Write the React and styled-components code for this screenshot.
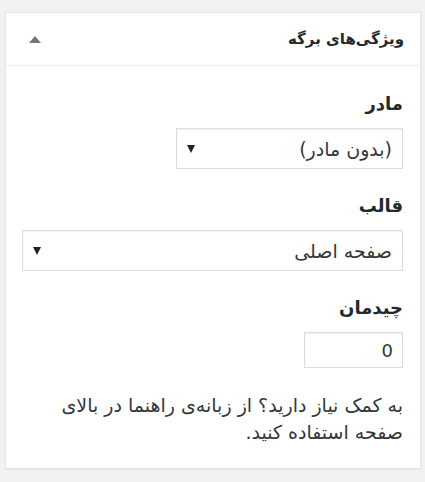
import React from 'react';
import styled, { createGlobalStyle } from 'styled-components';

const GlobalStyle = createGlobalStyle`
    html, body {
        margin: 0;
        padding: 0;
        background: #f1f1f1;
    }
    body {
        font-family: "DejaVu Sans", "Noto Sans", sans-serif;
        color: #32373c;
    }
`;

const Page = styled.div`
    padding: 12px 4px 14px 5px;
`;

const Box = styled.div`
    direction: rtl;
    background: #fff;
    border: 1px solid #e5e5e5;
    box-shadow: 0 1px 1px rgba(0, 0, 0, 0.04);
`;

const Header = styled.div`
    display: flex;
    align-items: center;
    justify-content: space-between;
    height: 52px;
    padding: 0 16px 0 23px;
    border-bottom: 1px solid #eee;
`;

const Title = styled.h2`
    margin: 0;
    font-size: 15px;
    font-weight: bold;
    color: #23282d;
`;

const Toggle = styled.span`
    width: 0;
    height: 0;
    border-left: 6px solid transparent;
    border-right: 6px solid transparent;
    border-bottom: 7px solid #72777c;
`;

const Content = styled.div`
    padding: 25px 17px 22px 16px;
`;

const Label = styled.p`
    margin: ${p => (p.first ? '0' : '24px')} 0 11px;
    font-size: 18px;
    line-height: 26px;
    font-weight: bold;
    color: #23282d;
`;

const Select = styled.div`
    display: flex;
    align-items: center;
    justify-content: space-between;
    box-sizing: border-box;
    width: ${p => p.width || '100%'};
    height: 41px;
    padding: 0 10px 0 10px;
    border: 1px solid #ddd;
    box-shadow: inset 0 1px 2px rgba(0, 0, 0, 0.07);
    font-size: 19px;
    color: #32373c;
`;

const Arrow = styled.span`
    width: 0;
    height: 0;
    border-left: 4px solid transparent;
    border-right: 4px solid transparent;
    border-top: 8px solid #222;
`;

const NumberInput = styled.div`
    box-sizing: border-box;
    width: 99px;
    height: 36px;
    padding: 0 9px;
    border: 1px solid #ddd;
    box-shadow: inset 0 1px 2px rgba(0, 0, 0, 0.07);
    display: flex;
    align-items: center;
    justify-content: flex-end;
    direction: ltr;
    font-size: 18px;
    color: #32373c;
`;

const Help = styled.p`
    max-width: 350px;
    margin: 24px 0 0;
    font-size: 19px;
    line-height: 27px;
    color: #32373c;
`;

export default function App() {
    return (
        <Page>
            <GlobalStyle />
            <Box>
                <Header>
                    <Title>ویژگی‌های برگه</Title>
                    <Toggle />
                </Header>
                <Content>
                    <Label first>مادر</Label>
                    <Select width="227px">
                        <span>(بدون مادر)</span>
                        <Arrow />
                    </Select>
                    <Label>قالب</Label>
                    <Select>
                        <span>صفحه اصلی</span>
                        <Arrow />
                    </Select>
                    <Label>چیدمان</Label>
                    <NumberInput>0</NumberInput>
                    <Help>به کمک نیاز دارید؟ از زبانه‌ی راهنما در بالای صفحه استفاده کنید.</Help>
                </Content>
            </Box>
        </Page>
    );
}
